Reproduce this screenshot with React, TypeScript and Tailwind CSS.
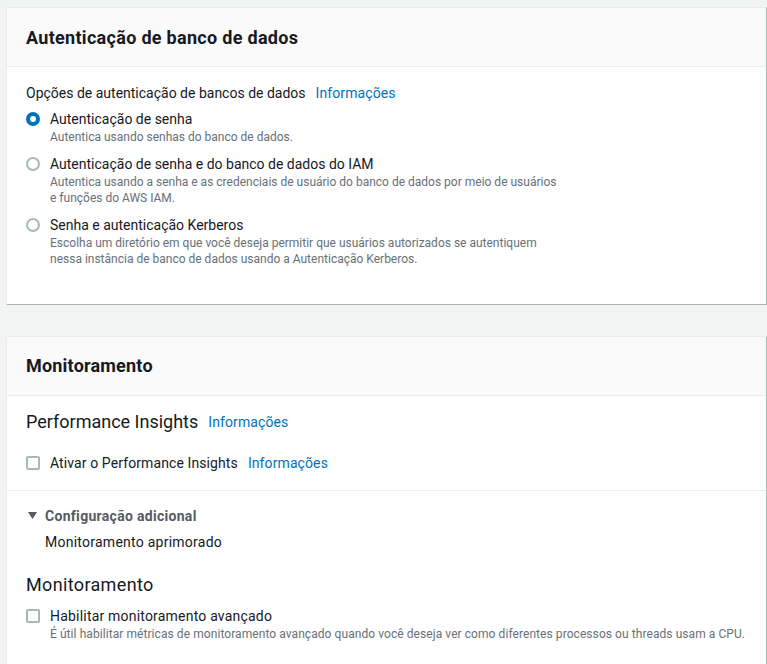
import React from "react";

const font = { fontFamily: "Roboto, 'Noto Sans', Arial, sans-serif" };

function Radio({ checked }: { checked?: boolean }) {
    return checked ? (
        <span className="mt-[3px] flex h-[14px] w-[14px] shrink-0 items-center justify-center rounded-full bg-[#0073bb]">
            <span className="h-[6px] w-[6px] rounded-full bg-white" />
        </span>
    ) : (
        <span className="mt-[3px] h-[14px] w-[14px] shrink-0 rounded-full border-2 border-[#aab7b8] bg-white" />
    );
}

function Checkbox() {
    return <span className="block h-[14px] w-[14px] shrink-0 rounded-[2px] border-2 border-[#aab7b8] bg-white" />;
}

function Info() {
    return <span className="text-[14px] tracking-[0.1px] text-[#0073bb]">Informações</span>;
}

function RadioOption({ checked, label, lines }: { checked?: boolean; label: string; lines: string[] }) {
    return (
        <div className="flex gap-[10px]">
            <Radio checked={checked} />
            <div>
                <div className="text-[14px] leading-[20px] text-[#16191f]">{label}</div>
                {lines.map((l) => (
                    <div key={l} className="text-[12px] leading-[16px] text-[#687078]">
                        {l}
                    </div>
                ))}
            </div>
        </div>
    );
}

export default function App() {
    return (
        <div className="min-h-[664px] bg-[#f2f3f3] pl-[6px] pt-[7px]" style={font}>
            {/* autenticação */}
            <div className="border border-r-[#aab7b8] border-[#eaeded] border-b-[#aab7b8] bg-white">
                <div className="border-b border-[#eaeded] bg-[#fafafa] px-[19px] pb-[16px] pt-[18px]">
                    <h2 className="text-[18px] font-bold leading-[24px] tracking-[0.3px] text-[#16191f]">Autenticação de banco de dados</h2>
                </div>
                <div className="px-[19px] pb-[37px] pt-[16px]">
                    <div className="flex items-center gap-[10px] text-[14px] leading-[20px] text-[#16191f]">
                        <span>Opções de autenticação de bancos de dados</span>
                        <Info />
                    </div>
                    <div className="mt-[6px] flex flex-col gap-[9px]">
                        <RadioOption checked label="Autenticação de senha" lines={["Autentica usando senhas do banco de dados."]} />
                        <RadioOption
                            label="Autenticação de senha e do banco de dados do IAM"
                            lines={[
                                "Autentica usando a senha e as credenciais de usuário do banco de dados por meio de usuários",
                                "e funções do AWS IAM.",
                            ]}
                        />
                        <RadioOption
                            label="Senha e autenticação Kerberos"
                            lines={[
                                "Escolha um diretório em que você deseja permitir que usuários autorizados se autentiquem",
                                "nessa instância de banco de dados usando a Autenticação Kerberos.",
                            ]}
                        />
                    </div>
                </div>
            </div>

            {/* monitoramento */}
            <div className="mt-[31px] border border-r-[#aab7b8] border-[#eaeded] bg-white">
                <div className="border-b border-[#eaeded] bg-[#fafafa] px-[19px] pb-[17px] pt-[17px]">
                    <h2 className="text-[18px] font-bold leading-[24px] tracking-[0.2px] text-[#16191f]">Monitoramento</h2>
                </div>
                <div className="px-[19px] pb-[17px] pt-[14px]">
                    <div className="flex items-center gap-[10px]">
                        <span className="text-[18px] leading-[24px] text-[#16191f]">Performance Insights</span>
                        <Info />
                    </div>
                    <div className="mt-[19px] flex items-center gap-[10px] text-[14px] leading-[20px] text-[#16191f]">
                        <Checkbox />
                        <span className="tracking-[0.1px]">Ativar o Performance Insights</span>
                        <Info />
                    </div>
                </div>
                <div className="border-t border-[#eaeded] px-[19px] pb-[24px] pt-[15px]">
                    <div className="flex items-center gap-[8px] text-[14px] font-bold leading-[20px] tracking-[0.3px] text-[#545b64]">
                        <svg width="9" height="8" viewBox="0 0 9 8" className="ml-[2px]">
                            <polygon points="0,0 9,0 4.5,7" fill="#545b64" />
                        </svg>
                        <span>Configuração adicional</span>
                    </div>
                    <div className="mt-[6px] pl-[19px] text-[14px] leading-[20px] tracking-[0.25px] text-[#16191f]">Monitoramento aprimorado</div>
                    <div className="mt-[21px] text-[18px] leading-[24px] tracking-[0.35px] text-[#16191f]">Monitoramento</div>
                    <div className="mt-[9px] flex gap-[10px]">
                        <span className="mt-[3px] shrink-0">
                            <Checkbox />
                        </span>
                        <div>
                            <div className="text-[14px] leading-[20px] tracking-[0.2px] text-[#16191f]">Habilitar monitoramento avançado</div>
                            <div className="whitespace-nowrap text-[12px] leading-[16px] tracking-[0.07px] text-[#687078]">
                                É útil habilitar métricas de monitoramento avançado quando você deseja ver como diferentes processos ou threads usam a CPU.
                            </div>
                        </div>
                    </div>
                </div>
            </div>
        </div>
    );
}
